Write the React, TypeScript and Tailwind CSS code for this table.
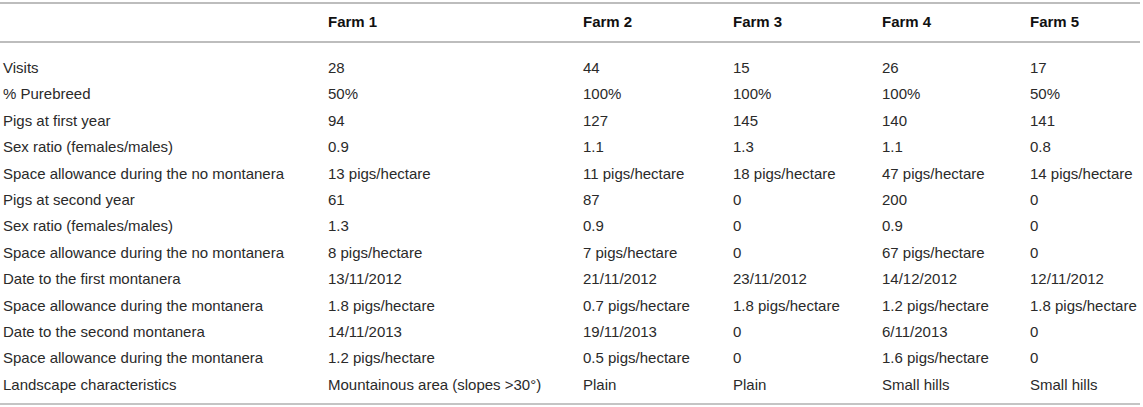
const farms = ["Farm 1", "Farm 2", "Farm 3", "Farm 4", "Farm 5"];

const rows: [string, string[]][] = [
  ["Visits", ["28", "44", "15", "26", "17"]],
  ["% Purebreed", ["50%", "100%", "100%", "100%", "50%"]],
  ["Pigs at first year", ["94", "127", "145", "140", "141"]],
  ["Sex ratio (females/males)", ["0.9", "1.1", "1.3", "1.1", "0.8"]],
  [
    "Space allowance during the no montanera",
    ["13 pigs/hectare", "11 pigs/hectare", "18 pigs/hectare", "47 pigs/hectare", "14 pigs/hectare"],
  ],
  ["Pigs at second year", ["61", "87", "0", "200", "0"]],
  ["Sex ratio (females/males)", ["1.3", "0.9", "0", "0.9", "0"]],
  ["Space allowance during the no montanera", ["8 pigs/hectare", "7 pigs/hectare", "0", "67 pigs/hectare", "0"]],
  ["Date to the first montanera", ["13/11/2012", "21/11/2012", "23/11/2012", "14/12/2012", "12/11/2012"]],
  [
    "Space allowance during the montanera",
    ["1.8 pigs/hectare", "0.7 pigs/hectare", "1.8 pigs/hectare", "1.2 pigs/hectare", "1.8 pigs/hectare"],
  ],
  ["Date to the second montanera", ["14/11/2013", "19/11/2013", "0", "6/11/2013", "0"]],
  ["Space allowance during the montanera", ["1.2 pigs/hectare", "0.5 pigs/hectare", "0", "1.6 pigs/hectare", "0"]],
  ["Landscape characteristics", ["Mountainous area (slopes >30°)", "Plain", "Plain", "Small hills", "Small hills"]],
];

export default function App() {
  return (
    <div className="min-h-screen bg-white pt-[2px] font-['Liberation_Sans',Arial,sans-serif] text-[15px]">
      <table className="w-[1140px] table-fixed border-collapse">
        <colgroup>
          <col className="w-[328px]" />
          <col className="w-[255px]" />
          <col className="w-[150px]" />
          <col className="w-[149px]" />
          <col className="w-[148px]" />
          <col className="w-[110px]" />
        </colgroup>
        <thead>
          <tr className="border-y-2 border-[#bdbdbd]">
            <th />
            {farms.map((f) => (
              <th key={f} className="h-[39px] p-0 text-left font-bold text-[#111]">
                {f}
              </th>
            ))}
          </tr>
        </thead>
        <tbody className="border-b-2 border-[#c4c4c4] text-[#2a2a2a]">
          {rows.map(([label, vals], i) => {
            const pad = i === 0 ? "pt-[12px]" : i === rows.length - 1 ? "pb-[5px]" : "";
            return (
              <tr key={i}>
                <td className={`p-0 pl-[3px] leading-[26.4px] whitespace-nowrap ${pad}`}>{label}</td>
                {vals.map((v, j) => (
                  <td key={j} className={`p-0 leading-[26.4px] whitespace-nowrap ${pad}`}>
                    {v}
                  </td>
                ))}
              </tr>
            );
          })}
        </tbody>
      </table>
    </div>
  );
}
